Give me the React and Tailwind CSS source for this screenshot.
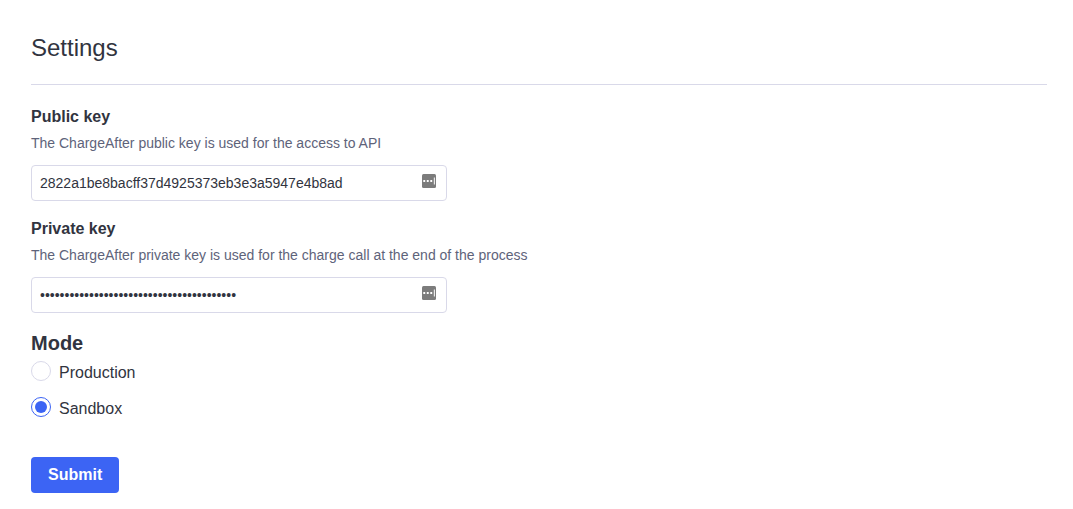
import React from 'react';

function FillIcon() {
  return (
    <svg viewBox="0 0 14 14" className="size-3.5" aria-hidden="true">
      <rect width="14" height="14" rx="1.5" fill="#7c7c7c" />
      <rect x="1.3" y="6" width="1.9" height="2" fill="#fff" />
      <rect x="4.8" y="6" width="1.9" height="2" fill="#fff" />
      <rect x="8.3" y="6" width="1.9" height="2" fill="#fff" />
      <rect x="11.8" y="3.5" width="1.2" height="7" fill="#e8e8e8" />
    </svg>
  );
}

function KeyField({ id, label, hint, type, value }) {
  return (
    <div>
      <label htmlFor={id} className="block text-base leading-6 font-bold">{label}</label>
      <p id={id + '-hint'} className="mt-1 text-sm leading-5 text-[#5e637a]">{hint}</p>
      <div className="relative mt-3 max-w-104">
        <input
          id={id}
          type={type}
          defaultValue={value}
          aria-describedby={id + '-hint'}
          className="block h-9 w-full rounded-sm border border-[#d9d9e9] bg-white pr-9 pl-2 text-sm"
        />
        <span className="absolute top-[9px] right-[11px]"><FillIcon /></span>
      </div>
    </div>
  );
}

function ModeOption({ label, checked }) {
  return (
    <label className="flex items-start gap-2 text-base leading-6">
      <input
        type="radio"
        name="mode"
        defaultChecked={checked}
        className="size-5 appearance-none rounded-full border border-[#d9d9e9] bg-white bg-clip-content p-[3px] checked:border-[#3c64f4] checked:bg-[#3c64f4]"
      />
      {label}
    </label>
  );
}

export default function App() {
  return (
    <main className="bg-white pt-8 pr-[26px] pb-4 pl-[31px] font-['Liberation_Sans',sans-serif] text-[#313440]">
      <h1 className="border-b border-[#d9d9e9] pb-5 text-2xl leading-8">Settings</h1>
      <form className="flex flex-col items-start" onSubmit={(e) => e.preventDefault()}>
        <div className="flex w-full flex-col gap-4 pt-5">
          <KeyField id="public-key" label="Public key" hint="The ChargeAfter public key is used for the access to API" type="text" value="2822a1be8bacff37d4925373eb3e3a5947e4b8ad" />
          <KeyField id="private-key" label="Private key" hint="The ChargeAfter private key is used for the charge call at the end of the process" type="password" value="2822a1be8bacff37d4925373eb3e3a5947e4b8ad" />
        </div>
        <fieldset className="mt-4">
          <legend className="pb-1 text-xl leading-7 font-bold">Mode</legend>
          <div className="flex flex-col gap-3">
            <ModeOption label="Production" />
            <ModeOption label="Sandbox" checked />
          </div>
        </fieldset>
        <button type="submit" className="mt-9 h-9 rounded-sm bg-[#3c64f4] px-[17px] text-base font-bold text-white">Submit</button>
      </form>
    </main>
  );
}
